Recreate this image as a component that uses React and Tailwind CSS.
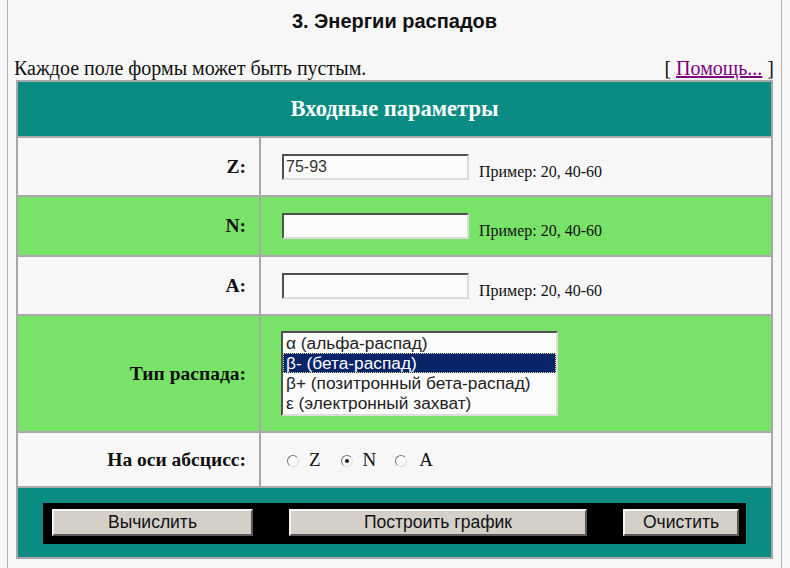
import React from "react"

const serif = { fontFamily: '"Liberation Serif", "Times New Roman", serif' }
const sans = { fontFamily: '"Liberation Sans", Arial, sans-serif' }

function TextBox({ value }) {
  return (
    <div
      className="w-[187px] h-[26px] bg-[#fbfbfb] border-2 border-t-[#505050] border-l-[#505050] border-b-[#dcdcdc] border-r-[#dcdcdc] px-[2px] text-[16px] leading-[22px] text-[#333]"
      style={sans}
    >
      {value}
    </div>
  )
}

function Example() {
  return (
    <span className="ml-[10px] pt-[10px] text-[16px] text-[#111]" style={serif}>
      Пример: 20, 40-60
    </span>
  )
}

function Radio({ checked }) {
  return (
    <span className="relative inline-block w-[12px] h-[12px] rounded-full bg-[#fafafa] border border-t-[#777] border-l-[#777] border-b-[#ddd] border-r-[#ddd]">
      {checked && <span className="absolute left-[3px] top-[3px] w-[4px] h-[4px] rounded-full bg-[#222]" />}
    </span>
  )
}

function Button({ children, className }) {
  return (
    <div
      className={`h-[27px] flex items-center justify-center bg-[#d4d0c8] border-2 border-t-[#f4f4f4] border-l-[#f4f4f4] border-b-[#5a5a5a] border-r-[#5a5a5a] text-[17.5px] text-[#111] ${className}`}
      style={sans}
    >
      {children}
    </div>
  )
}

export default function App() {
  const options = [
    "α (альфа-распад)",
    "β- (бета-распад)",
    "β+ (позитронный бета-распад)",
    "ε (электронный захват)",
  ]

  return (
    <div className="w-[790px] h-[568px] bg-[#f7f7f7] overflow-hidden">
      <div className="ml-[7px] w-[775px] h-full border-x border-[#b0b0b0] px-[8px]">
        {/* Title */}
        <div className="pt-[6px] h-[52px] text-center text-[20px] font-bold text-[#111]" style={sans}>
          3. Энергии распадов
        </div>

        <div className="flex justify-between items-end h-[28px] pb-[1px] text-[20px] leading-[22px] text-[#111]" style={serif}>
          <span className="-ml-[2px]">Каждое поле формы может быть пустым.</span>
          <span className="-mr-[1px]">
            [ <span className="text-[#800080] underline">Помощь...</span> ]
          </span>
        </div>

        {/* Form table */}
        <div
          className="grid grid-cols-[241px_1fr] grid-rows-[54px_57px_58px_57px_115px_53px_69px] gap-[2px] bg-[#a8a8a8] border-2 border-[#a8a8a8]"
          style={serif}
        >
          <div className="col-span-2 bg-[#0a8c84] flex items-center justify-center text-white text-[22.5px] font-bold">
            Входные параметры
          </div>

          <div className="bg-[#f7f7f7] flex items-center justify-end pr-[13px] text-[19.5px] font-bold text-[#111]">Z:</div>
          <div className="bg-[#f7f7f7] flex items-center pl-[21px]">
            <TextBox value="75-93" />
            <Example />
          </div>

          <div className="bg-[#78e368] flex items-center justify-end pr-[13px] text-[19.5px] font-bold text-[#111]">N:</div>
          <div className="bg-[#78e368] flex items-center pl-[21px]">
            <TextBox value="" />
            <Example />
          </div>

          <div className="bg-[#f7f7f7] flex items-center justify-end pr-[13px] text-[19.5px] font-bold text-[#111]">A:</div>
          <div className="bg-[#f7f7f7] flex items-center pl-[21px]">
            <TextBox value="" />
            <Example />
          </div>

          <div className="bg-[#78e368] flex items-center justify-end pr-[13px] text-[19.5px] font-bold text-[#111]">Тип распада:</div>
          <div className="bg-[#78e368] flex items-center pl-[20px]">
            <div
              className="w-[277px] h-[85px] bg-[#fbfbfb] border-2 border-t-[#505050] border-l-[#505050] border-b-[#dcdcdc] border-r-[#dcdcdc] text-[17.3px] leading-[20px] text-[#222] overflow-hidden"
              style={sans}
            >
              {options.map((o, i) => (
                <div
                  key={o}
                  className={
                    i === 1
                      ? "h-[20px] px-[3px] whitespace-nowrap bg-[#0a246a] text-white outline-1 outline-dotted outline-[#e8e0a0] -outline-offset-1"
                      : "h-[20px] px-[3px] whitespace-nowrap"
                  }
                >
                  {o}
                </div>
              ))}
            </div>
          </div>

          <div className="bg-[#f7f7f7] flex items-center justify-end pr-[13px] text-[19.5px] font-bold text-[#111]">На оси абсцисс:</div>
          <div className="bg-[#f7f7f7] flex items-center pl-[26px] pt-[2px] text-[19px] text-[#111]">
            <Radio />
            <span className="ml-[10px] mr-[20px]">Z</span>
            <Radio checked />
            <span className="ml-[10px] mr-[19px]">N</span>
            <Radio />
            <span className="ml-[12px]">A</span>
          </div>

          <div className="col-span-2 bg-[#0a8c84] px-[25px] pt-[15px] pb-[13px]">
            <div className="h-[41px] bg-black flex items-start justify-between pt-[6px] pl-[9px] pr-[7px]">
              <Button className="w-[201px]">Вычислить</Button>
              <Button className="w-[298px]">Построить график</Button>
              <Button className="w-[116px]">Очистить</Button>
            </div>
          </div>
        </div>
      </div>
    </div>
  )
}
